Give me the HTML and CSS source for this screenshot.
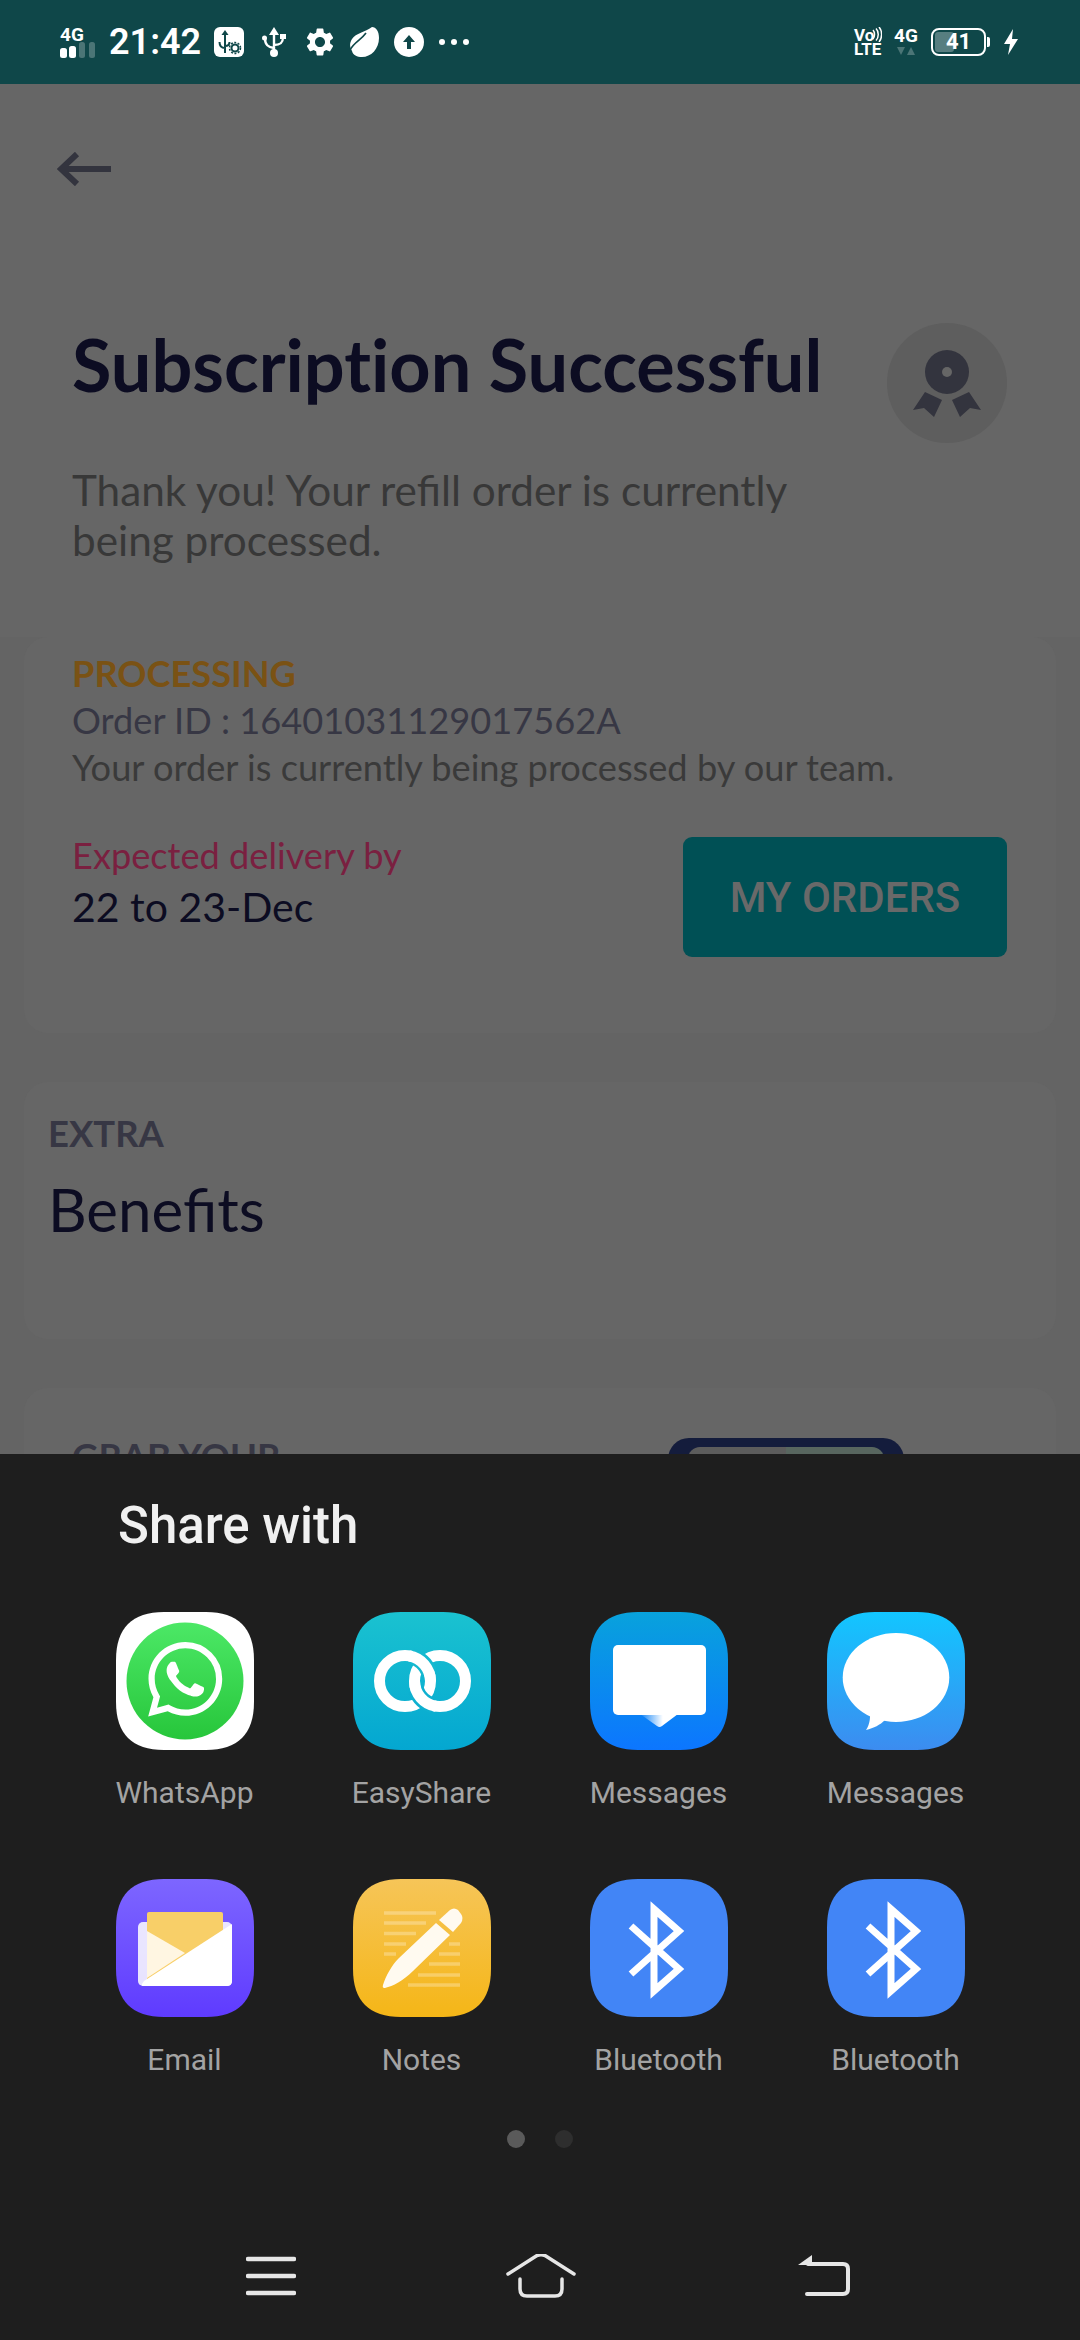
FILE: index.html
```html
<!DOCTYPE html>
<html lang="en">
<head>
  <meta charset="UTF-8">
  <meta name="viewport" content="width=device-width, initial-scale=1.0">
  <title>Subscription Successful</title>
  <link rel="stylesheet" href="styles.css">
</head>
<body>
  <svg class="defs" width="0" height="0">
    <defs>
      <path id="squircle" d="M48 0H90C122 0 138 16 138 48V90C138 122 122 138 90 138H48C16 138 0 122 0 90V48C0 16 16 0 48 0Z"/>
      <linearGradient id="g-whatsapp" x1="0" y1="0" x2="0" y2="1"><stop offset="0" stop-color="#4ce866"/><stop offset="1" stop-color="#27c63b"/></linearGradient>
      <linearGradient id="g-easyshare" x1="0" y1="0" x2="0" y2="1"><stop offset="0" stop-color="#1ac2d0"/><stop offset="1" stop-color="#04a7d1"/></linearGradient>
      <linearGradient id="g-msg1" x1="0" y1="0" x2="0" y2="1"><stop offset="0" stop-color="#08a2dc"/><stop offset="1" stop-color="#0c76ff"/></linearGradient>
      <linearGradient id="g-msg2" x1="0" y1="0" x2="0" y2="1"><stop offset="0" stop-color="#12c6ff"/><stop offset="1" stop-color="#3c8cf0"/></linearGradient>
      <linearGradient id="g-tail" x1="0" y1="0" x2="1" y2="0"><stop offset="0" stop-color="#fff" stop-opacity="0"/><stop offset="0.6" stop-color="#fff"/></linearGradient>
      <linearGradient id="g-email" x1="0" y1="0" x2="0" y2="1"><stop offset="0" stop-color="#7d66ff"/><stop offset="1" stop-color="#5f3bff"/></linearGradient>
      <linearGradient id="g-notes" x1="0" y1="0" x2="0" y2="1"><stop offset="0" stop-color="#f6c558"/><stop offset="1" stop-color="#f5b617"/></linearGradient>
    </defs>
  </svg>

  <div class="screen">
    <div class="status-bar">
      <div class="st-signal">
        <span class="st-small">4G</span>
        <svg width="36" height="16" viewBox="0 0 36 16">
          <rect x="0" y="6" width="7" height="10" rx="2.5" fill="#fff"/>
          <rect x="9" y="4" width="7" height="12" rx="2.5" fill="#fff"/>
          <rect x="19" y="0" width="6" height="16" rx="2.5" fill="#fff" opacity=".25"/>
          <rect x="29" y="0" width="6" height="16" rx="2.5" fill="#fff" opacity=".25"/>
        </svg>
      </div>
      <span class="st-time">21:42</span>
      <svg class="st-box" width="30" height="30" viewBox="0 0 30 30">
        <rect width="30" height="30" rx="6" fill="#fff"/>
        <path d="M11 8v18M11 21c-4 0-5.500-2-5.500-6M11 19c3 0 4.500-1 4.500-4" fill="none" stroke="#0f4749" stroke-width="2"/>
        <path d="M11 3l3.500 5h-7z" fill="#0f4749"/>
        <circle cx="21" cy="21" r="3.500" fill="none" stroke="#0f4749" stroke-width="2"/>
        <circle cx="21" cy="21" r="5.500" fill="none" stroke="#0f4749" stroke-width="1.500" stroke-dasharray="2 1.500"/>
      </svg>
      <svg class="st-usb" width="24" height="30" viewBox="0 0 24 30">
        <path d="M12 0l5 8H7z" fill="#fff"/>
        <circle cx="12" cy="26" r="4" fill="#fff"/>
        <path d="M12 6v20M12 21C6 20 3 18 3 11M12 18c5 0 9-1 9-8" fill="none" stroke="#fff" stroke-width="2.400"/>
        <circle cx="2.500" cy="11" r="2.500" fill="#fff"/>
        <rect x="18" y="7" width="6" height="5" fill="#fff"/>
      </svg>
      <svg class="st-gear" width="28" height="28" viewBox="2 2 20 20">
        <path fill="#fff" d="M19.14 12.94c.04-.3.06-.61.06-.94 0-.32-.02-.64-.07-.94l2.03-1.58a.49.49 0 0 0 .12-.61l-1.92-3.32a.488.488 0 0 0-.59-.22l-2.39.96c-.5-.38-1.03-.7-1.62-.94l-.36-2.54a.484.484 0 0 0-.48-.41h-3.84c-.24 0-.43.17-.47.41l-.36 2.54c-.59.24-1.13.57-1.62.94l-2.39-.96c-.22-.08-.47 0-.59.22L2.74 8.87c-.12.21-.08.47.12.61l2.03 1.58c-.05.3-.09.63-.09.94s.02.64.07.94l-2.03 1.58a.49.49 0 0 0-.12.61l1.92 3.32c.12.22.37.29.59.22l2.39-.96c.5.38 1.03.7 1.62.94l.36 2.54c.05.24.24.41.48.41h3.84c.24 0 .44-.17.47-.41l.36-2.54c.59-.24 1.13-.56 1.62-.94l2.39.96c.22.08.47 0 .59-.22l1.92-3.32c.12-.22.07-.47-.12-.61l-2.01-1.58zM12 15.6c-1.98 0-3.6-1.62-3.6-3.6s1.62-3.6 3.6-3.6 3.6 1.62 3.6 3.6-1.62 3.6-3.6 3.6z"/>
      </svg>
      <svg class="st-leaf" width="30" height="30" viewBox="0 0 30 30">
        <path fill="#fff" d="M23 0C27 0 30 4 30 11C30 22 22 30 13 30C8 30 4 28 3 24C1 20 0 17 3 12C7 6 16 5 23 0Z"/>
        <path d="M1 23C5 15 12 13 17 6" fill="none" stroke="#0f4749" stroke-width="1.600"/>
      </svg>
      <svg class="st-up" width="30" height="30" viewBox="0 0 30 30">
        <circle cx="15" cy="15" r="15" fill="#fff"/>
        <path d="M15 8l6 7h-4v7h-4v-7H9z" fill="#0f4749"/>
      </svg>
      <svg class="st-dots" width="30" height="30" viewBox="0 0 30 30">
        <circle cx="3" cy="15" r="3" fill="#fff"/>
        <circle cx="15" cy="15" r="3" fill="#fff"/>
        <circle cx="27" cy="15" r="3" fill="#fff"/>
      </svg>

      <div class="st-volte">
        <span class="st-tiny">Vo<br>LTE</span>
        <svg class="st-waves" width="10" height="15" viewBox="0 0 10 15">
          <path d="M1 3c2 2 2 7 0 9M4 1.500c3 3 3 9 0 12M7 0c3.500 4 3.500 11 0 15" fill="none" stroke="#fff" stroke-width="1.500"/>
        </svg>
      </div>
      <div class="st-net">
        <span class="st-small">4G</span>
        <svg width="24" height="10" viewBox="0 0 24 10">
          <path d="M3 1h8l-4 8zM13 9h8l-4-8z" fill="#fff" opacity=".25"/>
        </svg>
      </div>
      <div class="battery">
        <div class="battery-body">
          <div class="battery-fill"></div>
          <span class="battery-level">41</span>
        </div>
        <div class="battery-cap"></div>
      </div>
      <svg class="st-bolt" width="14" height="26" viewBox="0 0 14 26">
        <path d="M9 0L0 15h6L4 26l10-16H8z" fill="#fff"/>
      </svg>
    </div>

    <div class="page">
      <div class="header">
        <svg class="back" width="54" height="34" viewBox="0 0 54 34">
          <path d="M54 17H4M20 2L4 17l16 15" fill="none" stroke="#33343e" stroke-width="6"/>
        </svg>
        <div class="title-row">
          <h1 class="title">Subscription Successful</h1>
          <div class="medal">
            <svg width="68" height="67" viewBox="0 0 68 67">
              <circle cx="34" cy="22" r="22" fill="#33343e"/>
              <circle cx="34" cy="22" r="5" fill="#666"/>
              <path d="M12 42L29 50L21 67L11 58L0 60ZM56 42L39 50L47 67L57 58L68 60Z" fill="#33343e"/>
            </svg>
          </div>
        </div>
        <p class="subtitle">Thank you! Your refill order is currently<br>being processed.</p>
      </div>

      <div class="content">
        <div class="card order-card">
          <div class="order-status">PROCESSING</div>
          <div class="order-id">Order ID : 16401031129017562A</div>
          <div class="order-note">Your order is currently being processed by our team.</div>
          <div class="delivery-row">
            <div class="delivery">
              <div class="delivery-label">Expected delivery by</div>
              <div class="delivery-date">22 to 23-Dec</div>
            </div>
            <div class="orders-btn">MY ORDERS</div>
          </div>
        </div>

        <div class="card benefits-card">
          <div class="eyebrow">EXTRA</div>
          <div class="benefits-title">Benefits</div>
        </div>

        <div class="card grab-card">
          <div class="eyebrow">GRAB YOUR</div>
          <div class="phone"><div class="phone-screen"></div></div>
        </div>
      </div>
    </div>

    <div class="sheet">
      <div class="sheet-title">Share with</div>
      <div class="apps">
        <div class="app">
          <svg width="138" height="138" viewBox="0 0 138 138">
            <use href="#squircle" fill="#fff"/>
            <circle cx="69" cy="69" r="58.500" fill="url(#g-whatsapp)"/>
            <path transform="translate(32 30) scale(3.100)" fill="#fff" d="M17.472 14.382c-.297-.149-1.758-.867-2.03-.967-.273-.099-.471-.148-.67.15-.197.297-.767.966-.94 1.164-.173.199-.347.223-.644.075-.297-.15-1.255-.463-2.39-1.475-.883-.788-1.48-1.761-1.653-2.059-.173-.297-.018-.458.13-.606.134-.133.298-.347.446-.52.149-.174.198-.298.298-.497.099-.198.05-.371-.025-.52-.075-.149-.669-1.612-.916-2.207-.242-.579-.487-.5-.669-.51-.173-.008-.371-.01-.57-.01-.198 0-.52.074-.792.372-.272.297-1.04 1.016-1.04 2.479 0 1.462 1.065 2.875 1.213 3.074.149.198 2.096 3.2 5.077 4.487.709.306 1.262.489 1.694.625.712.227 1.36.195 1.871.118.571-.085 1.758-.719 2.006-1.413.248-.694.248-1.289.173-1.413-.074-.124-.272-.198-.57-.347m-5.421 7.403h-.004a9.87 9.87 0 01-5.031-1.378l-.361-.214-3.741.982.998-3.648-.235-.374a9.86 9.86 0 01-1.51-5.26c.001-5.45 4.436-9.884 9.888-9.884 2.64 0 5.122 1.03 6.988 2.898a9.825 9.825 0 012.893 6.994c-.003 5.45-4.437 9.884-9.885 9.884m8.413-18.297A11.815 11.815 0 0012.05 0C5.495 0 .16 5.335.157 11.892c0 2.096.547 4.142 1.588 5.945L.057 24l6.305-1.654a11.882 11.882 0 005.683 1.448h.005c6.554 0 11.89-5.335 11.893-11.893a11.821 11.821 0 00-3.48-8.413z"/>
          </svg>
          <span class="app-name">WhatsApp</span>
        </div>
        <div class="app">
          <svg width="138" height="138" viewBox="0 0 138 138">
            <use href="#squircle" fill="url(#g-easyshare)"/>
            <g fill="none" stroke="#fff" stroke-width="11">
              <circle cx="52" cy="69" r="25.500"/>
              <circle cx="87" cy="69" r="25.500"/>
              <path d="M58.600 44.400A25.500 25.500 0 0 1 76 60.300" stroke="#15b9d0" stroke-width="16"/>
              <path d="M56 44A25.500 25.500 0 0 1 77.500 69"/>
              <path d="M63 77.700A25.500 25.500 0 0 0 80.400 93.600" stroke="#0eb0d0" stroke-width="16"/>
              <path d="M61.500 69A25.500 25.500 0 0 0 83 94.200"/>
            </g>
          </svg>
          <span class="app-name">EasyShare</span>
        </div>
        <div class="app">
          <svg width="138" height="138" viewBox="0 0 138 138">
            <use href="#squircle" fill="url(#g-msg1)"/>
            <rect x="23" y="33" width="93" height="70" rx="5" fill="#fff"/>
            <path d="M50 102L67 114Q69.500 116 72 114L88 102Z" fill="url(#g-tail)"/>
          </svg>
          <span class="app-name">Messages</span>
        </div>
        <div class="app">
          <svg width="138" height="138" viewBox="0 0 138 138">
            <use href="#squircle" fill="url(#g-msg2)"/>
            <ellipse cx="69" cy="65.500" rx="53.300" ry="44.500" fill="#fff"/>
            <path d="M42 97C44 104 43 112 39 118C47 116 53 113 58 108Z" fill="#fff"/>
          </svg>
          <span class="app-name">Messages</span>
        </div>
        <div class="app">
          <svg width="138" height="138" viewBox="0 0 138 138">
            <use href="#squircle" fill="url(#g-email)"/>
            <rect x="22" y="43" width="94" height="64" rx="5" fill="#fff" opacity=".85"/>
            <rect x="31" y="33" width="76" height="70" rx="2" fill="#f8cf68"/>
            <path d="M31 52L69 74L31 99Z" fill="#fff6e2"/>
            <path d="M116 45V102Q116 107 111 107H27Q24 107 28 102Z" fill="#fff"/>
          </svg>
          <span class="app-name">Email</span>
        </div>
        <div class="app">
          <svg width="138" height="138" viewBox="0 0 138 138">
            <use href="#squircle" fill="url(#g-notes)"/>
            <path d="M31 34H83M31 44H73M31 54.500H63M31 65H53M31 75H43M96 65H107M86 75H107M76 85H107M65 96H107M55 106H107" stroke="#fff" stroke-opacity=".28" stroke-width="3.500" fill="none"/>
            <path d="M83 44L97 56L60 92C50 102 40 107 32 109Q29 109.500 30 106C33 97 38 87 46 79Z" fill="#fffaf0"/>
            <path d="M86 41L97 31Q101 28 105 31L108 35Q111 39 108 44L100 53Z" fill="#fffaf0"/>
          </svg>
          <span class="app-name">Notes</span>
        </div>
        <div class="app">
          <svg width="138" height="138" viewBox="0 0 138 138">
            <use href="#squircle" fill="#4285f6"/>
            <path d="M41 47L89 90L64 112V30L89 52L41 95" fill="none" stroke="#fff" stroke-width="7"/>
          </svg>
          <span class="app-name">Bluetooth</span>
        </div>
        <div class="app">
          <svg width="138" height="138" viewBox="0 0 138 138">
            <use href="#squircle" fill="#4285f6"/>
            <path d="M41 47L89 90L64 112V30L89 52L41 95" fill="none" stroke="#fff" stroke-width="7"/>
          </svg>
          <span class="app-name">Bluetooth</span>
        </div>
      </div>
      <div class="pager">
        <span class="pager-dot active"></span>
        <span class="pager-dot"></span>
      </div>
      <div class="nav">
        <svg class="nav-menu" width="50" height="40" viewBox="0 0 50 40">
          <path d="M2 3H48M2 20H48M2 37H48" stroke="#e6e6e6" stroke-width="4.500" stroke-linecap="round"/>
        </svg>
        <svg class="nav-home" width="70" height="44" viewBox="0 0 70 44">
          <path d="M2 20L31 1.500Q35 0 39 1.500L68 20" fill="none" stroke="#e6e6e6" stroke-width="3.500" stroke-linecap="round"/>
          <path d="M14 25V35Q14 42 21 42H49Q56 42 56 35V25" fill="none" stroke="#e6e6e6" stroke-width="3.500" stroke-linecap="round"/>
        </svg>
        <svg class="nav-back" width="52" height="42" viewBox="0 0 52 42">
          <path d="M14 0V10H0Z" fill="#e6e6e6"/>
          <path d="M10 9H45Q50 9 50 14V34Q50 39 45 39H9" fill="none" stroke="#e6e6e6" stroke-width="4" stroke-linecap="round"/>
        </svg>
      </div>
    </div>
  </div>
</body>
</html>
```

FILE: styles.css
```css
* {
  box-sizing: border-box;
}
body {
  margin: 0;
  font-family: Lato, sans-serif;
  background: #1e1e1e;
}
.defs {
  position: absolute;
}
.screen {
  position: relative;
  width: 1080px;
  height: 2340px;
  overflow: hidden;
  display: flex;
  flex-direction: column;
}

/* status bar */
.status-bar {
  height: 84px;
  flex: none;
  display: flex;
  align-items: center;
  padding: 0 62px 0 60px;
  background: #0f4749;
  color: #fff;
  font-family: Roboto, sans-serif;
}
.status-bar svg {
  display: block;
  flex: none;
}
.st-small {
  font-weight: 700;
  font-size: 19px;
  line-height: 15px;
}
.st-tiny {
  display: block;
  font-weight: 700;
  font-size: 17px;
  line-height: 14px;
}
.st-signal {
  width: 36px;
  display: flex;
  flex-direction: column;
}
.st-time {
  width: 92px;
  margin-left: 13px;
  font-size: 36px;
  font-weight: 600;
  white-space: nowrap;
}
.st-box {
  margin-left: 13px;
}
.st-usb {
  margin-left: 18px;
}
.st-gear {
  margin-left: 20px;
}
.st-leaf {
  margin-left: 15px;
}
.st-up {
  margin-left: 15px;
}
.st-dots {
  margin-left: 15px;
}
.st-volte {
  position: relative;
  margin-left: auto;
  width: 27px;
}
.status-bar .st-waves {
  position: absolute;
  left: 18px;
  top: -1px;
}
.st-net {
  margin-left: 13px;
  display: flex;
  flex-direction: column;
  gap: 3px;
}
.battery {
  margin-left: 13px;
  display: flex;
  align-items: center;
}
.battery-body {
  position: relative;
  width: 55px;
  height: 28px;
  border: 2.5px solid #fff;
  border-radius: 8px;
  display: flex;
  align-items: center;
  justify-content: center;
}
.battery-fill {
  position: absolute;
  left: 2px;
  top: 2px;
  bottom: 2px;
  width: 19px;
  border-radius: 3px;
  background: rgba(255, 255, 255, 0.3);
}
.battery-level {
  position: relative;
  font-size: 22px;
  font-weight: 700;
  line-height: 22px;
}
.battery-cap {
  width: 3px;
  height: 10px;
  margin-left: 1px;
  background: #fff;
  border-radius: 0 2px 2px 0;
}
.st-bolt {
  margin-left: 14px;
}

/* page behind the sheet, colours as seen through the dim layer */
.page {
  flex: 1;
  background: #646464;
  display: flex;
  flex-direction: column;
  color: #0c0c22;
}
.header {
  height: 553px;
  flex: none;
  background: #666;
  padding: 68px 73px 0 72px;
}
.back {
  display: block;
  margin-left: -15px;
}
.title-row {
  display: flex;
  align-items: flex-start;
  justify-content: space-between;
  margin-top: 137px;
}
.title {
  margin: 1px 0 0;
  font-size: 72px;
  line-height: 80px;
  font-weight: 700;
  font-variant-ligatures: none;
  white-space: nowrap;
}
.medal {
  width: 120px;
  height: 120px;
  border-radius: 50%;
  background: #5e5e5e;
  display: flex;
  align-items: center;
  justify-content: center;
}
.medal svg {
  display: block;
}
.subtitle {
  margin: 22px 0 0;
  font-size: 42.3px;
  line-height: 50px;
  color: #383838;
}
.content {
  display: flex;
  flex-direction: column;
  gap: 49px;
  padding: 0 24px;
}
.card {
  background: #666;
  border-radius: 24px;
}
.order-card {
  height: 396px;
  padding: 13px 49px 0 48px;
  font-size: 36.2px;
  line-height: 47px;
}
.order-status {
  color: #7a5214;
  font-weight: 700;
}
.order-id {
  color: #373744;
}
.order-note {
  color: #3a3a3a;
}
.delivery-row {
  display: flex;
  justify-content: space-between;
  margin-top: 41px;
}
.delivery-label {
  color: #7a2040;
}
.delivery-date {
  margin-top: 4px;
  font-size: 41px;
}
.orders-btn {
  width: 324px;
  height: 120px;
  margin-top: 5px;
  border-radius: 9px;
  background: #005055;
  color: #696969;
  font-family: Roboto, sans-serif;
  font-weight: 500;
  font-size: 42px;
  display: flex;
  align-items: center;
  justify-content: center;
}
.benefits-card {
  height: 257px;
  padding: 28px 24px 0;
}
.eyebrow {
  font-size: 36.4px;
  line-height: 46px;
  font-weight: 700;
  color: #373744;
}
.benefits-title {
  margin-top: 15px;
  font-size: 60px;
  line-height: 76px;
}
.grab-card {
  position: relative;
  height: 400px;
  padding: 45px 48px 0;
}
.phone {
  position: absolute;
  left: 644px;
  top: 50px;
  width: 236px;
  height: 340px;
  padding: 9px 20px;
  border-radius: 21px;
  background: #141c3c;
}
.phone-screen {
  height: 100%;
  border-radius: 12px;
  background: linear-gradient(90deg, #5c5c5c 50%, #58665f 50%);
}

/* share sheet */
.sheet {
  position: absolute;
  left: 0;
  right: 0;
  bottom: 0;
  height: 886px;
  background: #1e1e1e;
  font-family: Roboto, sans-serif;
}
.sheet-title {
  padding: 44px 0 0 118px;
  font-size: 51px;
  line-height: 56px;
  font-weight: 500;
  color: #f0f0f0;
}
.apps {
  display: grid;
  grid-template-columns: repeat(4, 237px);
  grid-auto-rows: 267px;
  margin-top: 58px;
  padding-left: 66px;
}
.app {
  display: flex;
  flex-direction: column;
  align-items: center;
}
.app svg {
  display: block;
}
.app-name {
  margin-top: 25px;
  font-size: 30px;
  line-height: 36px;
  color: #a3a3a3;
}
.pager {
  display: flex;
  justify-content: center;
  gap: 30px;
  margin-top: -16px;
}
.pager-dot {
  width: 18px;
  height: 18px;
  border-radius: 50%;
  background: #2e2e2e;
}
.pager-dot.active {
  background: #5a5a5a;
}
.nav {
  display: flex;
  align-items: center;
  margin-top: 106px;
  padding-left: 246px;
}
.nav svg {
  display: block;
  flex: none;
}
.nav-home {
  margin-left: 210px;
}
.nav-back {
  margin-left: 222px;
}
```
